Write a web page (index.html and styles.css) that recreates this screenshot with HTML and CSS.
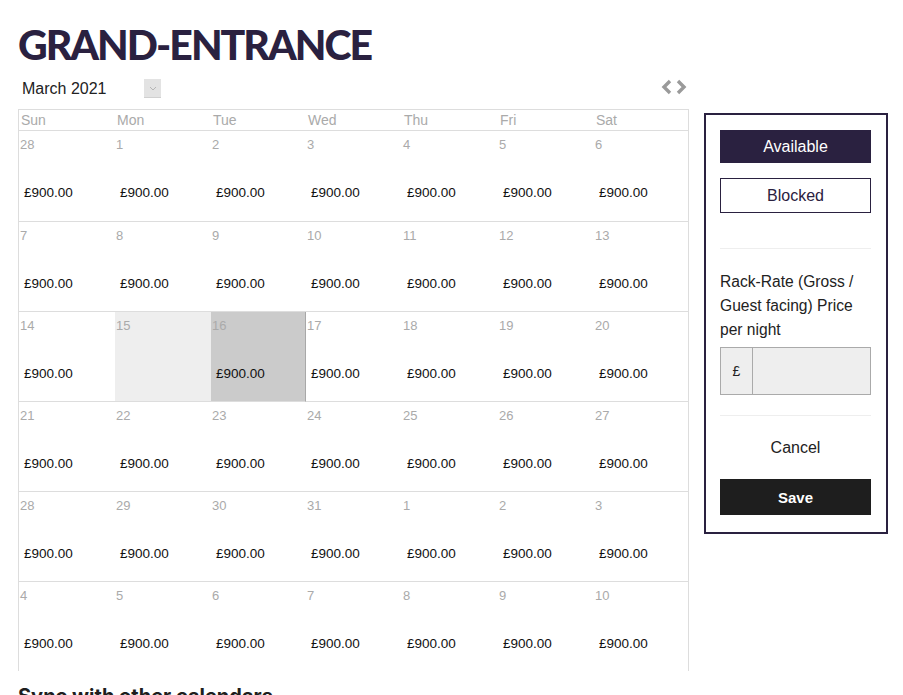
FILE: index.html
```html
<!DOCTYPE html>
<html>
<head>
<meta charset="utf-8">
<link rel="stylesheet" href="styles.css">
</head>
<body>
<div class="page">
  <h1 class="title">GRAND-ENTRANCE</h1>
  <div class="layout">
    <div class="main">
      <div class="toolbar">
        <div class="month-select">
          <span class="month-label">March 2021</span>
          <span class="select-btn"><svg width="8" height="5" viewBox="0 0 8 5"><path d="M1 1 L4 4 L7 1" fill="none" stroke="#b5b5b5" stroke-width="1"/></svg></span>
        </div>
        <div class="nav">
          <svg width="13" height="16" viewBox="0 0 13 16"><path d="M10 2 L4 8 L10 14" fill="none" stroke="#9a9a9a" stroke-width="3.4"/></svg>
          <svg width="13" height="16" viewBox="0 0 13 16"><path d="M3 2 L9 8 L3 14" fill="none" stroke="#9a9a9a" stroke-width="3.4"/></svg>
        </div>
      </div>
      <div class="calendar">
        <div class="head">Sun</div><div class="head">Mon</div><div class="head">Tue</div><div class="head">Wed</div><div class="head">Thu</div><div class="head">Fri</div><div class="head">Sat</div>

        <div class="cell first"><span class="num">28</span><span class="price">£900.00</span></div>
        <div class="cell first"><span class="num">1</span><span class="price">£900.00</span></div>
        <div class="cell first"><span class="num">2</span><span class="price">£900.00</span></div>
        <div class="cell first"><span class="num">3</span><span class="price">£900.00</span></div>
        <div class="cell first"><span class="num">4</span><span class="price">£900.00</span></div>
        <div class="cell first"><span class="num">5</span><span class="price">£900.00</span></div>
        <div class="cell first"><span class="num">6</span><span class="price">£900.00</span></div>

        <div class="cell"><span class="num">7</span><span class="price">£900.00</span></div>
        <div class="cell"><span class="num">8</span><span class="price">£900.00</span></div>
        <div class="cell"><span class="num">9</span><span class="price">£900.00</span></div>
        <div class="cell"><span class="num">10</span><span class="price">£900.00</span></div>
        <div class="cell"><span class="num">11</span><span class="price">£900.00</span></div>
        <div class="cell"><span class="num">12</span><span class="price">£900.00</span></div>
        <div class="cell"><span class="num">13</span><span class="price">£900.00</span></div>

        <div class="cell"><span class="num">14</span><span class="price">£900.00</span></div>
        <div class="cell hover"><span class="num">15</span><span class="price"></span></div>
        <div class="cell selected"><span class="num">16</span><span class="price">£900.00</span></div>
        <div class="cell"><span class="num">17</span><span class="price">£900.00</span></div>
        <div class="cell"><span class="num">18</span><span class="price">£900.00</span></div>
        <div class="cell"><span class="num">19</span><span class="price">£900.00</span></div>
        <div class="cell"><span class="num">20</span><span class="price">£900.00</span></div>

        <div class="cell"><span class="num">21</span><span class="price">£900.00</span></div>
        <div class="cell"><span class="num">22</span><span class="price">£900.00</span></div>
        <div class="cell"><span class="num">23</span><span class="price">£900.00</span></div>
        <div class="cell"><span class="num">24</span><span class="price">£900.00</span></div>
        <div class="cell"><span class="num">25</span><span class="price">£900.00</span></div>
        <div class="cell"><span class="num">26</span><span class="price">£900.00</span></div>
        <div class="cell"><span class="num">27</span><span class="price">£900.00</span></div>

        <div class="cell"><span class="num">28</span><span class="price">£900.00</span></div>
        <div class="cell"><span class="num">29</span><span class="price">£900.00</span></div>
        <div class="cell"><span class="num">30</span><span class="price">£900.00</span></div>
        <div class="cell"><span class="num">31</span><span class="price">£900.00</span></div>
        <div class="cell"><span class="num">1</span><span class="price">£900.00</span></div>
        <div class="cell"><span class="num">2</span><span class="price">£900.00</span></div>
        <div class="cell"><span class="num">3</span><span class="price">£900.00</span></div>

        <div class="cell"><span class="num">4</span><span class="price">£900.00</span></div>
        <div class="cell"><span class="num">5</span><span class="price">£900.00</span></div>
        <div class="cell"><span class="num">6</span><span class="price">£900.00</span></div>
        <div class="cell"><span class="num">7</span><span class="price">£900.00</span></div>
        <div class="cell"><span class="num">8</span><span class="price">£900.00</span></div>
        <div class="cell"><span class="num">9</span><span class="price">£900.00</span></div>
        <div class="cell"><span class="num">10</span><span class="price">£900.00</span></div>
      </div>
      <h2 class="subtitle">Sync with other calendars</h2>
    </div>
    <aside class="panel">
      <button class="btn btn-available">Available</button>
      <button class="btn btn-blocked">Blocked</button>
      <hr class="divider">
      <label class="rate-label">Rack-Rate (Gross / Guest facing) Price per night</label>
      <div class="input-group">
        <span class="addon">£</span>
        <span class="input"></span>
      </div>
      <hr class="divider">
      <div class="cancel">Cancel</div>
      <button class="btn btn-save">Save</button>
    </aside>
  </div>
</div>
</body>
</html>
```

FILE: styles.css
```css
* { box-sizing: border-box; }
html, body { margin: 0; padding: 0; background: #fff; }
body { font-family: "Liberation Sans", Arial, sans-serif; color: #1e1e1e; height: 695px; overflow: hidden; }

.page { padding: 0 0 0 18px; }

.title {
  margin: 0;
  padding-top: 21px;
  font-family: "Lato", sans-serif;
  font-weight: 900;
  font-size: 41px;
  line-height: 48px;
  color: #2a2140;
  letter-spacing: -2px;
  height: 72px;
}

.layout { display: flex; align-items: flex-start; gap: 15px; }

.main { width: 671px; }

.toolbar {
  display: flex;
  justify-content: space-between;
  align-items: flex-start;
  height: 37px;
  padding-top: 7px;
}
.month-select { display: flex; align-items: center; padding-left: 4px; }
.month-label { font-size: 16px; color: #222; width: 122px; }
.select-btn {
  width: 17px; height: 19px;
  background: #e3e3e3;
  display: flex; align-items: center; justify-content: center;
  border-bottom: 1px solid #d0d0d0;
}
.nav { display: flex; gap: 2px; padding-right: 1px; margin-top: 0; }

.calendar {
  display: grid;
  grid-template-columns: 96px 96px 95px 96px 96px 96px 95px;
  border-left: 1px solid #ddd;
  border-right: 1px solid #ddd;
  border-top: 1px solid #ddd;
  height: 562px;
  overflow: hidden;
}
.head {
  height: 21px;
  font-size: 14px;
  line-height: 21px;
  color: #aaa;
  padding-left: 2px;
  border-bottom: 1px solid #ddd;
}
.cell {
  height: 90px;
  border-bottom: 1px solid #ddd;
  display: flex;
  flex-direction: column;
  padding: 6px 0 0 1px;
}
.cell.first { height: 91px; }
.num { font-size: 13px; color: #aaa; line-height: 16px; height: 16px; }
.price { font-size: 13.5px; color: #111; line-height: 16px; margin-top: 32px; padding-left: 4px; }
.cell.hover { background: #eeeeee; }
.cell.selected { background: #cbcbcb; border-right: 1px solid #a8a8a8; }

.subtitle {
  margin: 13px 0 0 0;
  font-family: "Inter", sans-serif;
  font-size: 20px;
  font-weight: 700;
  color: #1e1e1e;
}

.panel {
  margin-top: 41px;
  width: 184px;
  border: 2px solid #2a2140;
  padding: 15px 15px 17px 14px;
  display: flex;
  flex-direction: column;
}
.btn {
  display: block;
  width: 151px;
  font-family: "Liberation Sans", Arial, sans-serif;
  font-size: 16px;
  cursor: pointer;
}
.btn-available {
  height: 33px;
  background: #2a2140;
  color: #fff;
  border: none;
}
.btn-blocked {
  margin-top: 15px;
  height: 35px;
  background: #fff;
  color: #2a2140;
  border: 1px solid #2a2140;
}
.divider {
  width: 151px;
  margin: 0;
  border: none;
  border-top: 1px solid #eee;
}
.btn-blocked + .divider { margin-top: 35px; }
.rate-label {
  margin-top: 21px;
  font-size: 15.6px;
  line-height: 24px;
  color: #222;
}
.input-group {
  margin-top: 5px;
  display: flex;
  width: 151px;
  height: 48px;
  border: 1px solid #aaa;
  background: #eee;
}
.addon {
  width: 32px;
  border-right: 1px solid #aaa;
  display: flex; align-items: center; justify-content: center;
  font-size: 14px;
  color: #222;
}
.input { flex: 1; }
.input-group + .divider { margin-top: 20px; }
.cancel {
  margin-top: 22px;
  text-align: center;
  font-size: 16px;
  color: #222;
  line-height: 20px;
}
.btn-save {
  margin-top: 21px;
  height: 36px;
  background: #1e1e1e;
  color: #fff;
  border: none;
  font-weight: 700;
  font-size: 15px;
}
```
